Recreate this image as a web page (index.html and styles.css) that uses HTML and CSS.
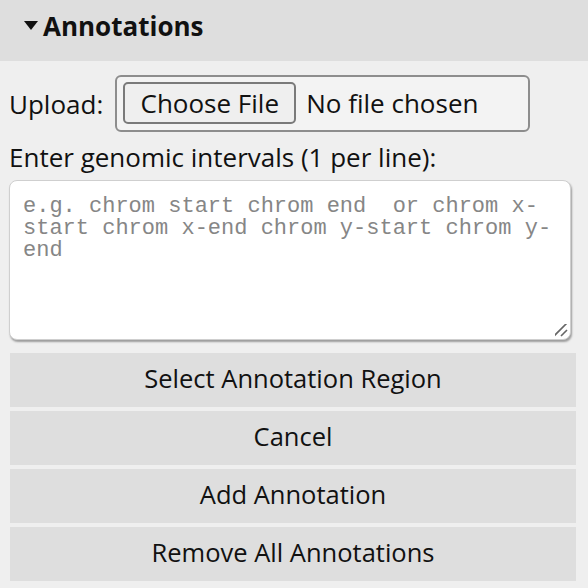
FILE: index.html
```html
<!DOCTYPE html>
<html lang="en">
<head>
<meta charset="utf-8">
<title>Annotations</title>
<link rel="stylesheet" href="styles.css">
</head>
<body>
<section class="annotations">
  <h2 class="section-head"><span class="caret"></span>Annotations</h2>
  <div class="panel">
    <div class="upload-row">
      <span class="upload-label">Upload:</span>
      <div class="file-box">
        <span class="file-btn">Choose File</span>
        <span class="file-name">No file chosen</span>
      </div>
    </div>
    <label class="field-label" for="intervals">Enter genomic intervals (1 per line):</label>
    <textarea id="intervals" class="intervals" placeholder="e.g. chrom start chrom end  or chrom x-start chrom x-end chrom y-start chrom y-end"></textarea>
    <div class="actions">
      <button class="action">Select Annotation Region</button>
      <button class="action">Cancel</button>
      <button class="action">Add Annotation</button>
      <button class="action">Remove All Annotations</button>
    </div>
  </div>
</section>
</body>
</html>
```

FILE: styles.css
```css
html, body {
  margin: 0;
  padding: 0;
  background: #efefef;
}
body {
  font-family: "Open Sans", "DejaVu Sans", sans-serif;
  color: #111;
  width: 588px;
  height: 588px;
  overflow: hidden;
}
.section-head {
  margin: 0;
  height: 61px;
  box-sizing: border-box;
  background: #dedede;
  display: flex;
  align-items: center;
  padding: 0 0 9px 24px;
  font-size: 26px;
  font-weight: 700;
  color: #111;
}
.caret {
  width: 0;
  height: 0;
  border-left: 7px solid transparent;
  border-right: 7px solid transparent;
  border-top: 9px solid #111;
  margin-right: 5px;
  margin-top: -1px;
}
.panel {
  padding: 14px 12px 0 9px;
}
.upload-row {
  display: flex;
  align-items: center;
  font-size: 26px;
}
.upload-label {
  margin-right: 12px;
}
.file-box {
  display: flex;
  align-items: center;
  width: 415px;
  height: 57px;
  box-sizing: border-box;
  border: 2px solid #8d8d8d;
  border-radius: 6px;
  padding: 0 6px 1px;
  background: #f3f3f3;
}
.file-btn {
  display: flex;
  align-items: center;
  justify-content: center;
  width: 173px;
  height: 42px;
  box-sizing: border-box;
  border: 2px solid #7a7a7a;
  border-radius: 5px;
  background: #efefef;
  margin-right: 10px;
  padding-bottom: 1px;
}
.field-label {
  display: block;
  margin-top: 8px;
  font-size: 26px;
  line-height: 34px;
}
.intervals {
  display: block;
  width: 562px;
  height: 160px;
  box-sizing: border-box;
  margin: 6px 0 0 0;
  border: 1px solid #cfcfcf;
  border-radius: 8px;
  box-shadow: 1px 2px 2px rgba(0,0,0,0.35);
  background: #fff;
  padding: 15px 13px 12px;
  font-family: "Liberation Mono", monospace;
  font-size: 22px;
  line-height: 22px;
  color: #222;
}
.intervals::placeholder {
  color: #868686;
}
.intervals::-webkit-resizer {
  background: url("data:image/svg+xml,%3Csvg xmlns='http://www.w3.org/2000/svg' width='15' height='15'%3E%3Cpath d='M1 14 L14 1 M8 14 L14 8' stroke='%23666' stroke-width='1.6' fill='none'/%3E%3C/svg%3E") no-repeat right 2px bottom 2px;
}
.actions {
  display: flex;
  flex-direction: column;
  gap: 4px;
  margin: 13px 0 0 1px;
}
.action {
  height: 54px;
  border: none;
  background: #dedede;
  font-family: "Open Sans", "DejaVu Sans", sans-serif;
  font-size: 25.5px;
  color: #111;
  padding: 0 0 5px;
}
```
